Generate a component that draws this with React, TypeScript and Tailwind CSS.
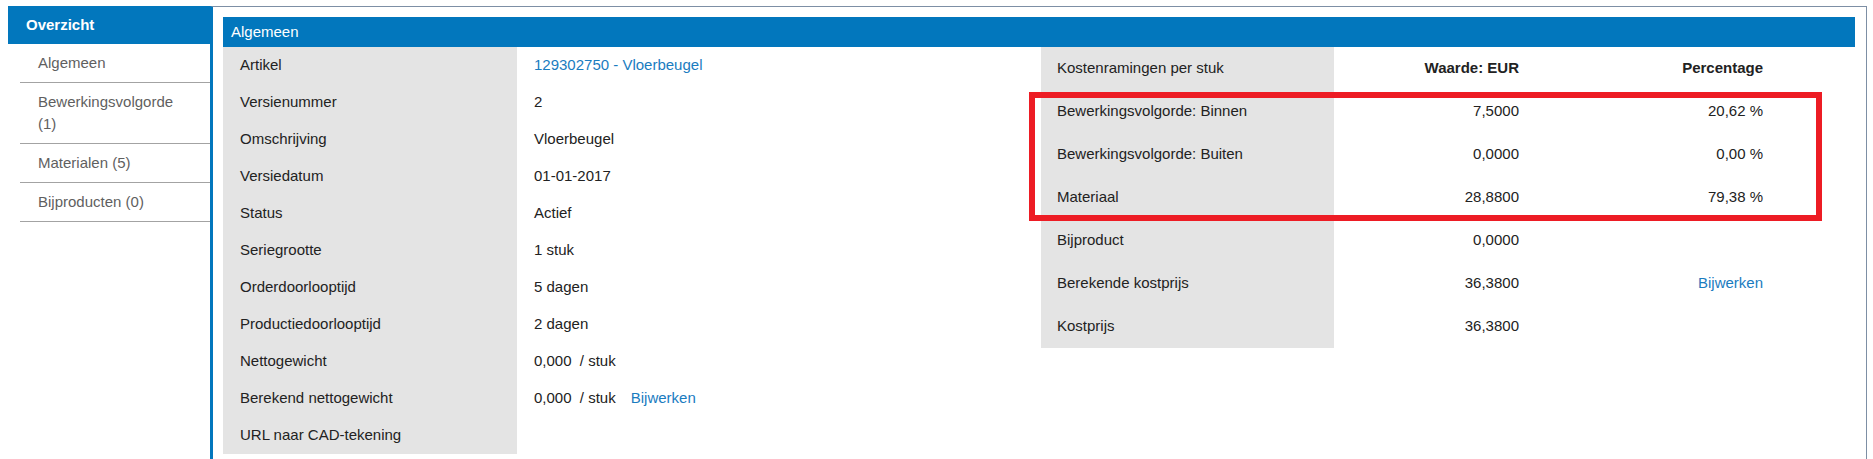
import React from "react";

const navItems = ["Algemeen", "Bewerkingsvolgorde (1)", "Materialen (5)", "Bijproducten (0)"];

const linkCls = "text-[#1a7cbf]";

const generalRows: { label: string; value: React.ReactNode }[] = [
  { label: "Artikel", value: <span className={linkCls}>129302750 - Vloerbeugel</span> },
  { label: "Versienummer", value: "2" },
  { label: "Omschrijving", value: "Vloerbeugel" },
  { label: "Versiedatum", value: "01-01-2017" },
  { label: "Status", value: "Actief" },
  { label: "Seriegrootte", value: "1 stuk" },
  { label: "Orderdoorlooptijd", value: "5 dagen" },
  { label: "Productiedoorlooptijd", value: "2 dagen" },
  { label: "Nettogewicht", value: <span>0,000&nbsp; / stuk</span> },
  {
    label: "Berekend nettogewicht",
    value: (
      <span>
        0,000&nbsp; / stuk<span className={`${linkCls} ml-[15px]`}>Bijwerken</span>
      </span>
    ),
  },
  { label: "URL naar CAD-tekening", value: "" },
];

const costRows: { label: string; value: string; pct: React.ReactNode }[] = [
  { label: "Bewerkingsvolgorde: Binnen", value: "7,5000", pct: "20,62 %" },
  { label: "Bewerkingsvolgorde: Buiten", value: "0,0000", pct: "0,00 %" },
  { label: "Materiaal", value: "28,8800", pct: "79,38 %" },
  { label: "Bijproduct", value: "0,0000", pct: "" },
  { label: "Berekende kostprijs", value: "36,3800", pct: <span className={linkCls}>Bijwerken</span> },
  { label: "Kostprijs", value: "36,3800", pct: "" },
];

function Sidebar() {
  return (
    <aside className="w-[202px] shrink-0">
      <div className="h-[38px] bg-[#0277bd] text-white font-bold pl-[18px] flex items-center">
        Overzicht
      </div>
      <ul className="ml-[12px]">
        {navItems.map((item) => (
          <li
            key={item}
            className="border-b border-[#a3a3a3] pl-[18px] pr-[30px] py-[8px] leading-[22px] text-[#5f5f5f]"
          >
            {item}
          </li>
        ))}
      </ul>
    </aside>
  );
}

function GeneralTable() {
  return (
    <div className="w-[818px] shrink-0">
      {generalRows.map((row) => (
        <div key={row.label} className="flex h-[37px]">
          <div className="w-[294px] bg-[#e4e4e4] pl-[17px] flex items-center">{row.label}</div>
          <div className="pl-[17px] flex items-center">{row.value}</div>
        </div>
      ))}
    </div>
  );
}

function CostTable() {
  return (
    <div className="relative flex-1">
      <div className="flex h-[43px]">
        <div className="w-[293px] bg-[#e4e4e4] pl-[16px] flex items-center">Kostenramingen per stuk</div>
        <div className="w-[201px] pr-[16px] flex items-center justify-end font-bold">Waarde: EUR</div>
        <div className="w-[244px] pr-[16px] flex items-center justify-end font-bold">Percentage</div>
      </div>
      {costRows.map((row) => (
        <div key={row.label} className="flex h-[43px]">
          <div className="w-[293px] bg-[#e4e4e4] pl-[16px] flex items-center">{row.label}</div>
          <div className="w-[201px] pr-[16px] flex items-center justify-end">{row.value}</div>
          <div className="w-[244px] pr-[16px] flex items-center justify-end">{row.pct}</div>
        </div>
      ))}
      {/* annotation box */}
      <div className="absolute left-[-12px] top-[45px] w-[793px] h-[129px] border-[6px] border-[#ed1c24] pointer-events-none" />
    </div>
  );
}

export default function App() {
  return (
    <div className="flex h-screen pt-[6px] pl-[8px] pr-[6px] bg-white text-[15px] text-[#222] font-['Liberation_Sans',Arial,sans-serif]">
      <Sidebar />
      <main className="flex-1 border-l-[3px] border-l-[#0277bd] border-t border-t-[#7d8fa5] border-r border-r-[#7d8fa5] pt-[10px] pl-[10px] pr-[11px]">
        <div className="h-[30px] bg-[#0277bd] text-white pl-[8px] flex items-center">Algemeen</div>
        <div className="flex">
          <GeneralTable />
          <CostTable />
        </div>
      </main>
    </div>
  );
}
